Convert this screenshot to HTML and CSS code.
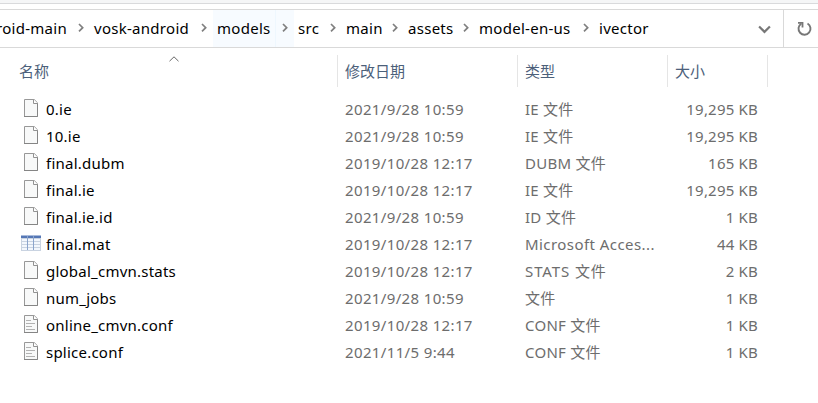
FILE: index.html
```
<!DOCTYPE html>
<html lang="zh-CN">
<head>
<meta charset="utf-8">
<title>ivector</title>
<link rel="stylesheet" href="styles.css">
</head>
<body>
<svg class="defs" width="0" height="0" aria-hidden="true">
  <symbol id="next" viewBox="0 0 8 10"><path d="M2 1 5.700 4.700 2 8.400" fill="none" stroke="#808080" stroke-width="1.7"/></symbol>
  <symbol id="page" viewBox="0 0 16 19">
    <path d="M1.500.5h9.700l3.300 3.300v13.700h-13z" fill="#f8f9f9" stroke="#989898"/>
    <path d="M14.500 4v13.500H1" fill="none" stroke="#858585"/>
    <path d="M10.500.5v4h4" fill="#fff" stroke="#929292"/>
  </symbol>
  <symbol id="lines" viewBox="0 0 16 19">
    <use href="#page"/>
    <path d="M3 5.500h5M3 8.500h9M3 11.500h6M3 14.500h9" stroke="#b2b2b2" fill="none"/>
  </symbol>
  <symbol id="table" viewBox="0 0 20 16">
    <path d="M0 0h20v16H0z" fill="#c9d3e1"/>
    <path d="M0 0h20v3H0z" fill="#5577b5"/>
    <path d="M0 0h20v1H0z" fill="#a9bbdb"/>
    <path d="M1 4h5v2H1zM7 4h5v2H7zM13 4h6v2h-6zM1 7h5v2H1zM7 7h5v2H7zM13 7h6v2h-6zM1 10h5v2H1zM7 10h5v2H7zM13 10h6v2h-6zM1 13h5v2H1zM7 13h5v2H7zM13 13h6v2h-6z" fill="#f3f7fd"/>
    <path d="M6.500 1v14M12.500 1v14" stroke="#8ba4cc"/>
  </symbol>
</svg>
<div class="ribbon"></div>
<nav class="address">
  <div class="crumbs">
    <div class="crumb first"><span>roid-main</span><svg class="next"><use href="#next"/></svg></div>
    <div class="crumb"><span>vosk-android</span><svg class="next"><use href="#next"/></svg></div>
    <div class="crumb hot"><span>models</span><svg class="next"><use href="#next"/></svg></div>
    <div class="crumb"><span>src</span><svg class="next"><use href="#next"/></svg></div>
    <div class="crumb"><span>main</span><svg class="next"><use href="#next"/></svg></div>
    <div class="crumb"><span>assets</span><svg class="next"><use href="#next"/></svg></div>
    <div class="crumb"><span>model-en-us</span><svg class="next"><use href="#next"/></svg></div>
    <div class="crumb"><span>ivector</span></div>
  </div>
  <svg class="down" viewBox="0 0 12 8"><path d="M1 1.200 6 6.200l5-5" fill="none" stroke="#777" stroke-width="2"/></svg>
  <div class="refresh"><svg viewBox="0 0 16 16"><path d="M4.200 2.700A6 6 0 1 0 10.500 2.500" fill="none" stroke="#777" stroke-width="1.9"/><path d="M1 1.900h4.500v4.600" fill="none" stroke="#777" stroke-width="1.8"/></svg></div>
</nav>
<div class="heads">
  <div class="head">名称<svg class="sort" viewBox="0 0 10 6"><path d="M.5 5.200 5 .8l4.500 4.400" fill="none" stroke="#666"/></svg></div>
  <div class="head">修改日期</div>
  <div class="head">类型</div>
  <div class="head">大小</div>
</div>
<main class="files">
  <div class="row"><svg class="icon"><use href="#page"/></svg><span class="name">0.ie</span><span class="date">2021/9/28 10:59</span><span class="type">IE 文件</span><span class="size">19,295 KB</span></div>
  <div class="row"><svg class="icon"><use href="#page"/></svg><span class="name">10.ie</span><span class="date">2021/9/28 10:59</span><span class="type">IE 文件</span><span class="size">19,295 KB</span></div>
  <div class="row"><svg class="icon"><use href="#page"/></svg><span class="name">final.dubm</span><span class="date">2019/10/28 12:17</span><span class="type">DUBM 文件</span><span class="size">165 KB</span></div>
  <div class="row"><svg class="icon"><use href="#page"/></svg><span class="name">final.ie</span><span class="date">2019/10/28 12:17</span><span class="type">IE 文件</span><span class="size">19,295 KB</span></div>
  <div class="row"><svg class="icon"><use href="#page"/></svg><span class="name">final.ie.id</span><span class="date">2021/9/28 10:59</span><span class="type">ID 文件</span><span class="size">1 KB</span></div>
  <div class="row"><svg class="icon table"><use href="#table"/></svg><span class="name">final.mat</span><span class="date">2019/10/28 12:17</span><span class="type wide">Microsoft Acces...</span><span class="size">44 KB</span></div>
  <div class="row"><svg class="icon"><use href="#page"/></svg><span class="name">global_cmvn.stats</span><span class="date">2019/10/28 12:17</span><span class="type stats">STATS 文件</span><span class="size">2 KB</span></div>
  <div class="row"><svg class="icon"><use href="#page"/></svg><span class="name">num_jobs</span><span class="date">2021/9/28 10:59</span><span class="type">文件</span><span class="size">1 KB</span></div>
  <div class="row"><svg class="icon"><use href="#lines"/></svg><span class="name">online_cmvn.conf</span><span class="date">2019/10/28 12:17</span><span class="type">CONF 文件</span><span class="size">1 KB</span></div>
  <div class="row"><svg class="icon"><use href="#lines"/></svg><span class="name">splice.conf</span><span class="date">2021/11/5 9:44</span><span class="type">CONF 文件</span><span class="size">1 KB</span></div>
</main>
</body>
</html>
```
FILE: styles.css
```
* { box-sizing: border-box; }
body {
  margin: 0;
  background: #fff;
  color: #000;
  font: 15px/27px "Noto Sans", "Noto Sans CJK SC", sans-serif;
  overflow: hidden;
  white-space: nowrap;
}
.defs { position: absolute; }
.ribbon { height: 4px; background: #f5f6f7; border-bottom: 1px solid #d9dadc; }
.address {
  display: flex;
  align-items: center;
  height: 39px;
  margin-top: 5px;
  border-top: 1px solid #d9d9d9;
  border-bottom: 1px solid #d9d9d9;
}
.crumbs {
  display: grid;
  grid-template-columns: 90px 123px 81px 48px 62px 71px 120px 1fr;
  width: 758px;
  height: 37px;
  letter-spacing: .28px;
}
.crumb { display: flex; align-items: center; justify-content: space-between; padding: 0 5px 0 4px; }
.crumb.first { justify-content: flex-end; gap: 10px; padding-left: 0; }
.hot { background: linear-gradient(90deg, #f7fbff 62px, #eef7fe 62px, #eef7fe 63px, #f7fbff 63px); }
.next { flex: none; width: 8px; height: 10px; margin-bottom: 1px; }
.down { width: 13px; height: 9px; margin-top: 2px; }
.refresh {
  display: flex;
  align-items: center;
  height: 37px;
  margin-left: 12px;
  padding-left: 13px;
  border-left: 1px solid #d9d9d9;
}
.refresh svg { width: 16px; height: 16px; }
.heads {
  display: grid;
  grid-template-columns: 338px 180px 150px 100px;
  height: 32px;
  margin-top: 7px;
  color: #4c607a;
}
.head { position: relative; padding-left: 7px; border-right: 1px solid #e5e5e5; line-height: 32px; }
.head:first-child { padding-left: 19px; }
.sort { position: absolute; left: 169px; top: 1px; width: 10px; height: 6px; }
.files { margin-top: 9px; color: #6d6d6d; }
.row {
  display: grid;
  grid-template-columns: 23px 299px 180px 140px 93px;
  align-items: center;
  height: 27px;
  padding-left: 23px;
}
.icon { width: 16px; height: 19px; margin-bottom: 2px; }
.icon.table { width: 20px; height: 16px; margin-left: -2px; margin-bottom: 3px; }
.name { color: #000; letter-spacing: .23px; }
.date { letter-spacing: .36px; }
.type { letter-spacing: .25px; }
.type.wide { letter-spacing: .44px; }
.type.stats { letter-spacing: .9px; }
.size { text-align: right; letter-spacing: .2px; }
```
